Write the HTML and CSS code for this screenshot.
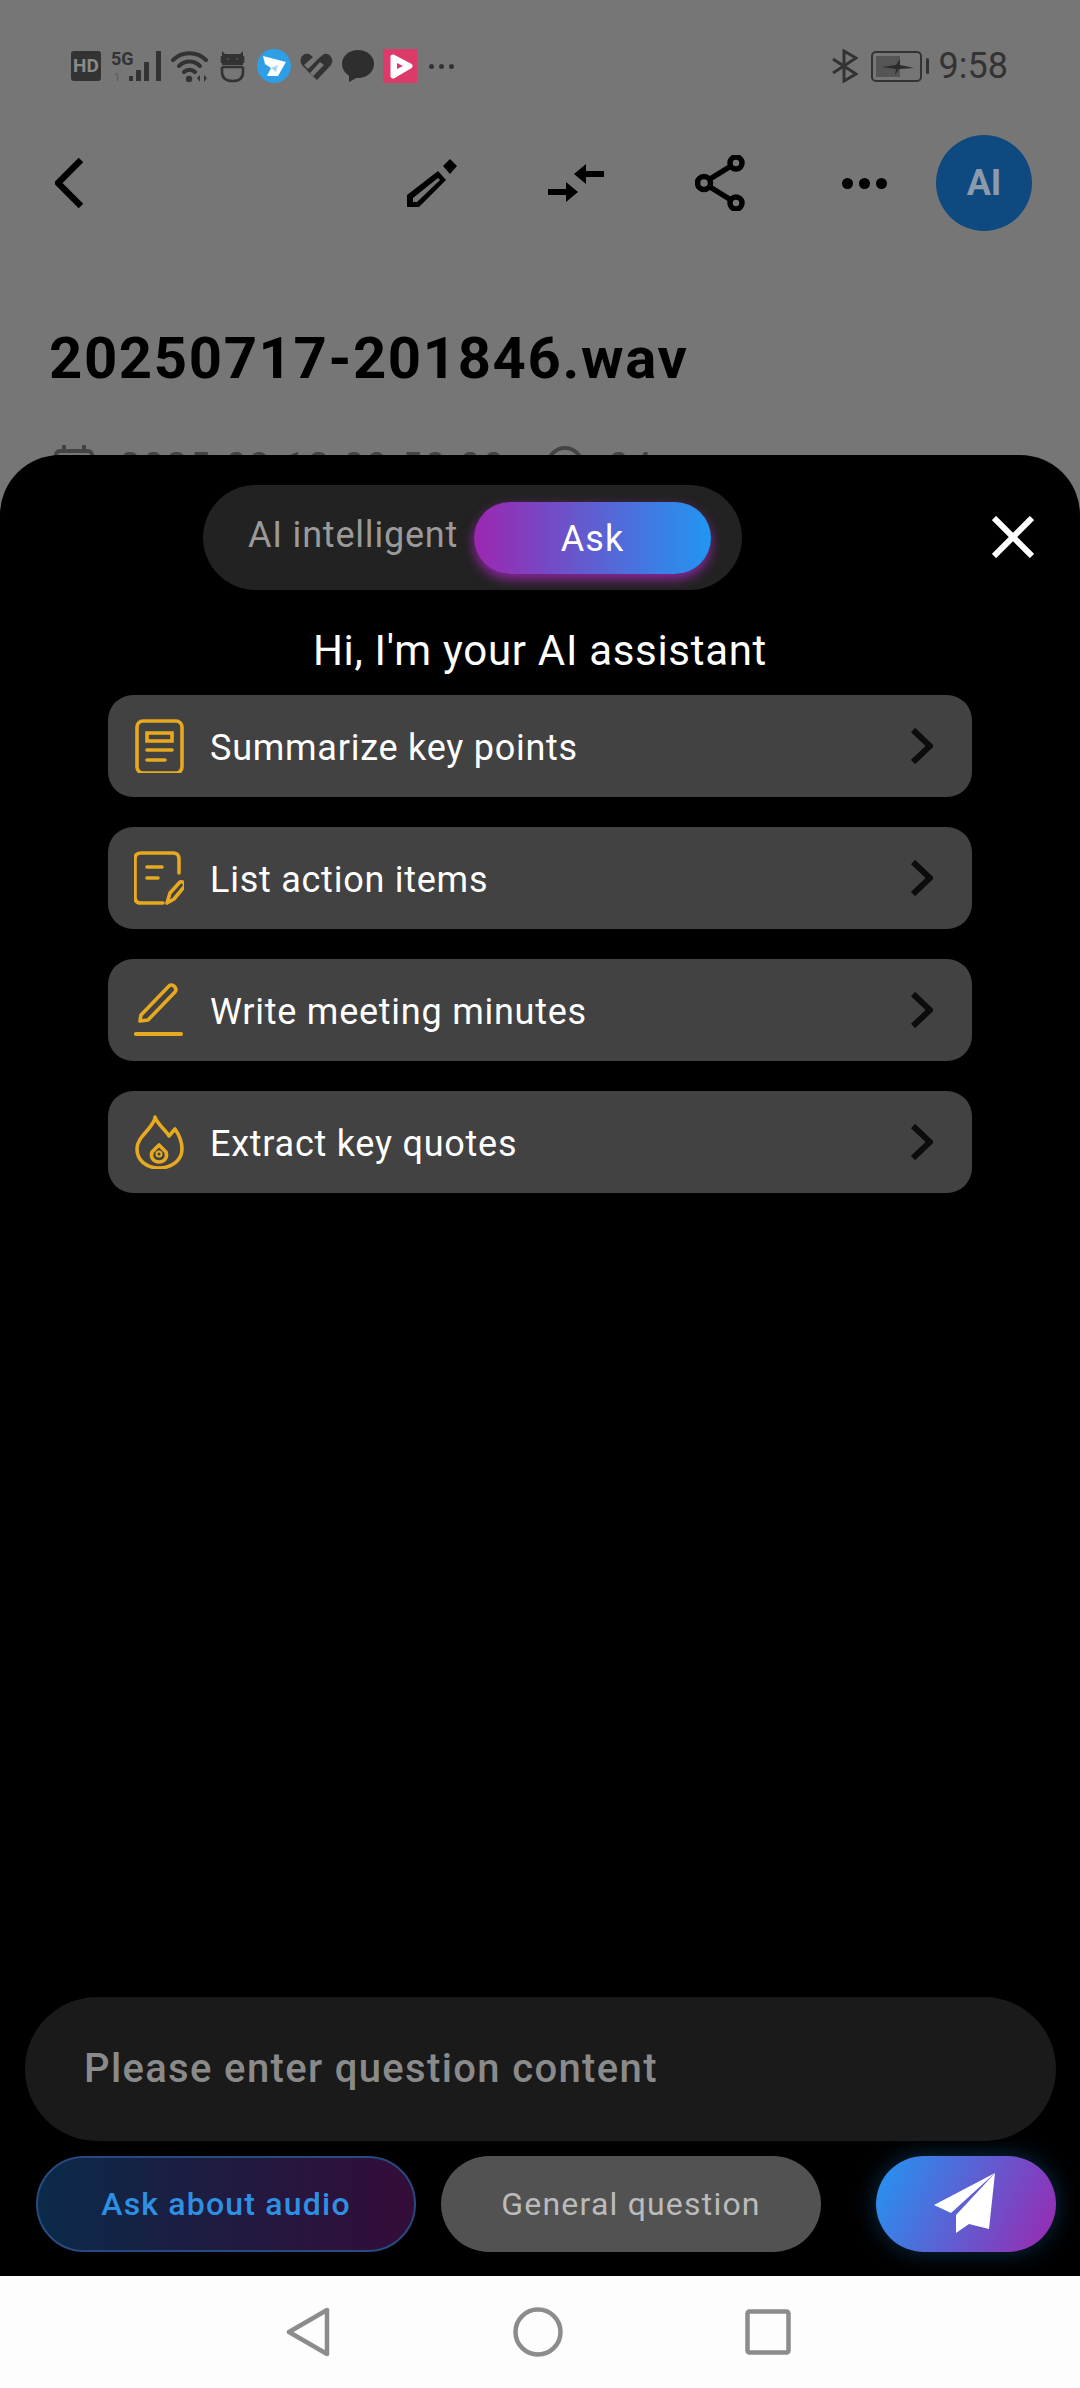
FILE: index.html
```html
<!DOCTYPE html>
<html>
<head>
  <meta charset="UTF-8">
  <meta name="viewport" content="width=device-width, initial-scale=1.0">
  <title>Recording detail</title>
  <link rel="stylesheet" href="styles.css">
</head>
<body>
  <div class="screen">
    <div class="main">
      <div class="status-bar">
        <div class="status-icons">
          <div class="hd">HD</div>
          <svg class="ic-signal" viewBox="0 0 54 34">
            <text x="2" y="16" class="sig-text">5G</text>
            <text x="5" y="32" class="sig-sub">1</text>
            <rect x="20" y="27" width="4" height="5" fill="#333"/>
            <rect x="27" y="21" width="5" height="11" fill="#333"/>
            <rect x="35" y="13" width="5" height="19" fill="#333"/>
            <rect x="47" y="2" width="5" height="30" fill="#333"/>
          </svg>
          <svg class="ic-wifi" viewBox="0 0 37 34" fill="none" stroke="#333" stroke-width="4" stroke-linecap="round">
            <path d="M2 11C11 2 26 2 35 11"/>
            <path d="M8 17C14 11 23 11 29 17"/>
            <path d="M13 23C16 20 21 20 24 23"/>
            <circle cx="18" cy="30" r="3.2" fill="#333" stroke="none"/>
            <path d="M26 29l3-3v7zM36 29l-3-3v7z" fill="#333" stroke="none"/>
          </svg>
          <svg class="ic-bot" viewBox="0 0 33 34" fill="none" stroke="#333" stroke-width="2.6">
            <path d="M6 2L9 5H24L27 2V16H6z" fill="#333" stroke="none"/>
            <circle cx="12" cy="10" r="2" fill="#767676"/>
            <circle cx="21" cy="10" r="2" fill="#767676"/>
            <path d="M6 14V7M27 14V7M6 18H27M6 18V23C6 29 10 32 17 32S27 29 27 23V18"/>
          </svg>
          <svg class="ic-app" viewBox="0 0 34 34">
            <circle cx="17" cy="17" r="17" fill="#2e9fe6"/>
            <path d="M6 7L29 13 21 27 10 27 14 19 8 15z" fill="#fff"/>
            <path d="M14 19L21 16 19 23z" fill="#a9d6f2"/>
          </svg>
          <svg class="ic-heart" viewBox="0 0 34 34" fill="#333">
            <path d="M17 31L3 16C-1 10 4 3 10 5L14 8 5 16 9 20 20 9 25 5C30 3 36 10 32 16L18 31 14 27 25 16 21 13 11 24z"/>
          </svg>
          <svg class="ic-bubble" viewBox="0 0 34 34">
            <ellipse cx="17" cy="15" rx="16" ry="14" fill="#2e2e2e"/>
            <path d="M8 24L8 33 17 28z" fill="#2e2e2e"/>
          </svg>
          <svg class="ic-app" viewBox="0 0 34 34">
            <rect width="34" height="34" fill="#dc3a68"/>
            <path d="M10 8L27 17 10 27z" fill="#fff" stroke="#fff" stroke-width="5" stroke-linejoin="round"/>
            <path d="M14 14L20 17 14 20z" fill="#dc3a68"/>
          </svg>
          <div class="more-dots"><span></span><span></span><span></span></div>
        </div>
        <div class="status-right">
          <svg class="ic-bt" viewBox="0 0 26 34" fill="none" stroke="#333" stroke-width="3">
            <path d="M1 10L24 25 12 32V2L24 9 1 24"/>
          </svg>
          <div class="battery">
            <div class="battery-body">
              <div class="battery-fill"></div>
              <svg class="battery-bolt" viewBox="0 0 32 16"><path d="M0 8L14 6 18 0 18 6 32 9 17 10 13 16 14 10z" fill="#2c2c2c"/></svg>
            </div>
            <div class="battery-nub"></div>
          </div>
          <span class="clock">9:58</span>
        </div>
      </div>

      <div class="toolbar">
        <svg class="back" viewBox="0 0 28 50" fill="none" stroke="#000" stroke-width="6.5"><path d="M26 2L3 25 26 48"/></svg>
        <div class="tool">
          <svg width="50" height="50" viewBox="0 0 50 50" fill="#000">
            <path d="M36 8L43 1 50 8 43 16z"/>
            <path d="M31 13L39 22 12 49H0V37zM31 20L6 40V44H10L33 22z" fill-rule="evenodd"/>
          </svg>
        </div>
        <div class="tool">
          <svg width="56" height="38" viewBox="0 0 56 38" fill="#000">
            <path d="M26 10L38 0V7H56V13H38V20z"/>
            <path d="M30 28L18 18V25H0V31H18V38z"/>
          </svg>
        </div>
        <div class="tool">
          <svg width="50" height="56" viewBox="0 0 50 56" fill="none" stroke="#000" stroke-width="5.5">
            <circle cx="9" cy="28" r="6.5"/>
            <circle cx="41" cy="8" r="6"/>
            <circle cx="41" cy="48" r="6"/>
            <path d="M15 24L36 11M15 32L36 45"/>
          </svg>
        </div>
        <div class="tool">
          <div class="more-dots big"><span></span><span></span><span></span></div>
        </div>
        <div class="avatar">AI</div>
      </div>

      <h1 class="file-title">20250717-201846.wav</h1>

      <div class="meta-row">
        <svg class="meta-cal" viewBox="0 0 40 40" fill="none" stroke="#444" stroke-width="4">
          <rect x="2" y="6" width="36" height="32" rx="4"/>
          <path d="M10 0V8M30 0V8"/>
        </svg>
        <span class="meta-text">2025-08-12 09:50:00</span>
        <svg class="meta-clock" viewBox="0 0 40 40" fill="none" stroke="#444" stroke-width="4"><circle cx="20" cy="20" r="17"/></svg>
        <span class="meta-text">04</span>
      </div>

      <div class="sheet">
        <div class="sheet-top">
          <div class="sheet-head">
            <div class="mode-switch">
              <span class="mode-label">AI intelligent</span>
              <span class="mode-active">Ask</span>
            </div>
            <svg class="close" viewBox="0 0 42 42" fill="none" stroke="#fff" stroke-width="6"><path d="M2 2L40 40M40 2L2 40"/></svg>
          </div>
          <div class="greeting">Hi, I'm your AI assistant</div>
          <div class="prompt-list">
            <div class="prompt">
              <svg class="prompt-icon" viewBox="0 0 50 54" fill="none" stroke="#e6a91f" stroke-width="3.6" stroke-linecap="round">
                <rect x="3" y="2" width="45" height="52" rx="6"/>
                <rect x="13" y="14" width="25" height="8"/>
                <path d="M13 31H38M13 41H31"/>
              </svg>
              <span class="prompt-text">Summarize key points</span>
              <svg class="chevron" viewBox="0 0 22 36" fill="none" stroke="#0c0c0c" stroke-width="6"><path d="M2 2L19 18 2 34"/></svg>
            </div>
            <div class="prompt">
              <svg class="prompt-icon" viewBox="0 0 50 54" fill="none" stroke="#e6a91f" stroke-width="3.6" stroke-linecap="round" stroke-linejoin="round">
                <path d="M45 22V8C45 4 43 2 39 2H7C3 2 1 4 1 8V46C1 50 3 52 7 52H29"/>
                <path d="M13 16H28M13 27H24"/>
                <path d="M33 52L36 42 46 31C49 30 52 33 50 36L40 48z"/>
              </svg>
              <span class="prompt-text">List action items</span>
              <svg class="chevron" viewBox="0 0 22 36" fill="none" stroke="#0c0c0c" stroke-width="6"><path d="M2 2L19 18 2 34"/></svg>
            </div>
            <div class="prompt">
              <svg class="prompt-icon" viewBox="0 0 50 54" fill="none" stroke="#e6a91f" stroke-width="3.6" stroke-linecap="round" stroke-linejoin="round">
                <path d="M7 32L35 3C38 0 44 5 41 9L14 37 6 38z"/>
                <path d="M2 51H47" stroke-width="4.2"/>
              </svg>
              <span class="prompt-text">Write meeting minutes</span>
              <svg class="chevron" viewBox="0 0 22 36" fill="none" stroke="#0c0c0c" stroke-width="6"><path d="M2 2L19 18 2 34"/></svg>
            </div>
            <div class="prompt">
              <svg class="prompt-icon" viewBox="0 0 50 54" fill="none" stroke="#e6a91f" stroke-width="3.6" stroke-linejoin="round">
                <path d="M21 2C23 9 32 15 35 21L41 14C46 21 48 28 48 34C48 45 38 53 25 53C12 53 3 45 3 34C3 24 12 18 16 12C18 9 21 6 21 2z"/>
                <path d="M25 30L32 37C34 43 30 47 25 47S16 43 18 37z"/>
                <circle cx="25" cy="39" r="2.5" stroke-width="2"/>
              </svg>
              <span class="prompt-text">Extract key quotes</span>
              <svg class="chevron" viewBox="0 0 22 36" fill="none" stroke="#0c0c0c" stroke-width="6"><path d="M2 2L19 18 2 34"/></svg>
            </div>
          </div>
        </div>

        <div class="composer">
          <div class="question-box">Please enter question content</div>
          <div class="composer-actions">
            <button class="chip chip-active">Ask about audio</button>
            <button class="chip">General question</button>
            <button class="send">
              <svg width="70" height="70" viewBox="0 0 70 70" fill="#fff">
                <path d="M66 4L5 36 22 44z"/>
                <path d="M66 4L27 46V64L40 55 60 60z"/>
              </svg>
            </button>
          </div>
        </div>
      </div>
    </div>

    <div class="nav-bar">
      <svg width="44" height="50" viewBox="0 0 44 50" fill="none" stroke="#8c8c8c" stroke-width="4.5" stroke-linejoin="round"><path d="M41 3V47L3 25z"/></svg>
      <svg width="50" height="50" viewBox="0 0 50 50" fill="none" stroke="#8c8c8c" stroke-width="4.5"><circle cx="25" cy="25" r="22.5"/></svg>
      <svg width="46" height="46" viewBox="0 0 46 46" fill="none" stroke="#8c8c8c" stroke-width="4.5"><rect x="2.5" y="2.5" width="41" height="41" rx="2"/></svg>
    </div>
  </div>
</body>
</html>
```

FILE: styles.css
```css
* {
  box-sizing: border-box;
}
body {
  margin: 0;
  font-family: Roboto, "Noto Sans", sans-serif;
}
.screen {
  width: 1080px;
  height: 2388px;
  display: flex;
  flex-direction: column;
  overflow: hidden;
}
.main {
  flex: 1;
  position: relative;
  background-color: #767676;
}

/* status bar */
.status-bar {
  height: 132px;
  padding: 0 72px 0 71px;
  display: flex;
  align-items: center;
  justify-content: space-between;
}
.status-icons,
.status-right {
  display: flex;
  align-items: center;
}
.status-icons {
  gap: 8px;
}
.hd {
  width: 30px;
  height: 30px;
  background-color: #333;
  border-radius: 3px;
  color: #8a8a8a;
  font-size: 19px;
  font-weight: 700;
  line-height: 30px;
  text-align: center;
}
.ic-signal {
  width: 54px;
  height: 34px;
  overflow: visible;
}
.sig-text {
  font-size: 18px;
  font-weight: 700;
  fill: #333;
}
.sig-sub {
  font-size: 11px;
  fill: #5a5a5a;
}
.ic-wifi {
  width: 37px;
  height: 34px;
}
.ic-bot {
  width: 33px;
  height: 34px;
}
.ic-app,
.ic-heart,
.ic-bubble {
  width: 34px;
  height: 34px;
}
.more-dots {
  width: 32px;
  display: flex;
  justify-content: center;
  gap: 5px;
}
.more-dots span {
  width: 5px;
  height: 5px;
  border-radius: 50%;
  background-color: #333;
}
.more-dots.big {
  width: auto;
  gap: 6px;
}
.more-dots.big span {
  width: 11px;
  height: 11px;
  background-color: #000;
}
.ic-bt {
  width: 26px;
  height: 34px;
  margin-right: 13px;
}
.battery {
  display: flex;
  align-items: center;
  gap: 4px;
  margin-right: 10px;
}
.battery-body {
  width: 51px;
  height: 31px;
  padding: 3px;
  border: 2.5px solid #333;
  border-radius: 5px;
  position: relative;
}
.battery-fill {
  width: 24px;
  height: 100%;
  background-color: #555;
}
.battery-bolt {
  position: absolute;
  left: 9px;
  top: 6px;
  width: 32px;
  height: 16px;
}
.battery-nub {
  width: 3px;
  height: 16px;
  background-color: #333;
  border-radius: 2px;
}
.clock {
  font-size: 36px;
  color: #333;
}

/* toolbar */
.toolbar {
  height: 102px;
  padding: 0 48px 0 55px;
  display: flex;
  align-items: center;
}
.back {
  width: 28px;
  height: 50px;
  margin-right: auto;
}
.tool {
  width: 144px;
  display: flex;
  justify-content: center;
  align-items: center;
}
.avatar {
  width: 96px;
  height: 96px;
  border-radius: 50%;
  background-color: #0e4a80;
  color: #8c9bac;
  font-size: 36px;
  font-weight: 700;
  line-height: 96px;
  text-align: center;
}
.file-title {
  margin: 0;
  padding: 91px 0 0 49px;
  font-size: 58px;
  font-weight: 700;
  line-height: 66px;
  letter-spacing: 1.65px;
  color: #000;
}
.meta-row {
  margin-top: 54px;
  padding-left: 54px;
  display: flex;
  align-items: flex-start;
}
.meta-cal {
  width: 40px;
  height: 40px;
}
.meta-clock {
  width: 40px;
  height: 40px;
  margin: 0 24px 0 38px;
}
.meta-text {
  margin-left: 26px;
  font-size: 36px;
  letter-spacing: 3px;
  line-height: 42px;
  color: #444;
}
.meta-clock + .meta-text {
  margin-left: 0;
}

/* ai sheet */
.sheet {
  position: absolute;
  top: 455px;
  left: 0;
  right: 0;
  bottom: 0;
  padding: 30px 24px 24px;
  background-color: #000;
  border-radius: 60px 60px 0 0;
  display: flex;
  flex-direction: column;
  justify-content: space-between;
}
.sheet-head {
  position: relative;
  display: flex;
  padding-left: 179px;
}
.mode-switch {
  width: 539px;
  height: 105px;
  padding: 0 31px 0 45px;
  background-color: #222;
  border-radius: 53px;
  display: flex;
  align-items: center;
  justify-content: space-between;
}
.mode-label {
  padding-bottom: 5px;
  font-size: 36px;
  letter-spacing: 0.8px;
  color: #9a9a9a;
}
.mode-active {
  width: 237px;
  height: 72px;
  padding-top: 1px;
  border-radius: 36px;
  background: linear-gradient(90deg, #9c27b0, #2196f3);
  box-shadow: 0 5px 12px rgba(156, 39, 176, 0.9);
  color: #fff;
  font-size: 36px;
  letter-spacing: 1px;
  line-height: 72px;
  text-align: center;
}
.close {
  position: absolute;
  top: 31px;
  right: 22px;
  width: 42px;
  height: 42px;
}
.greeting {
  margin-top: 36px;
  font-size: 42px;
  line-height: 50px;
  letter-spacing: 0.7px;
  text-align: center;
  color: #fff;
}
.prompt-list {
  margin: 19px 84px 0;
  display: flex;
  flex-direction: column;
  gap: 30px;
}
.prompt {
  height: 102px;
  padding: 0 27px 0 26px;
  background-color: #424242;
  border-radius: 25px;
  display: flex;
  align-items: center;
}
.prompt-icon {
  width: 50px;
  height: 54px;
  margin-right: 26px;
}
.prompt-text {
  flex: 1;
  padding-top: 3px;
  font-size: 36px;
  letter-spacing: 0.75px;
  color: #fff;
}
.chevron {
  width: 22px;
  height: 36px;
  margin-right: 12px;
}

/* bottom composer */
.composer {
  display: flex;
  flex-direction: column;
  gap: 15px;
}
.question-box {
  height: 144px;
  padding-left: 59px;
  margin-left: 1px;
  background-color: #1a1a1a;
  border-radius: 72px;
  font-size: 40px;
  font-weight: 500;
  line-height: 144px;
  letter-spacing: 1.35px;
  color: #8a8a8a;
}
.composer-actions {
  padding-left: 12px;
  display: flex;
  align-items: center;
  gap: 25px;
}
.chip {
  width: 380px;
  height: 96px;
  padding: 0;
  border: none;
  border-radius: 48px;
  background-color: #525252;
  font-family: inherit;
  font-size: 32px;
  letter-spacing: 1.2px;
  color: #bbb;
}
.chip-active {
  border: 2px solid #274a80;
  background: linear-gradient(90deg, #0b2a49, #340c38);
  font-weight: 500;
  color: #2e90e2;
}
.send {
  width: 180px;
  height: 96px;
  margin-left: auto;
  padding: 0 4px 0 0;
  border: none;
  border-radius: 48px;
  background: linear-gradient(115deg, #2196f3, #9c27b0);
  box-shadow: 0 0 24px rgba(33, 150, 243, 0.3);
  display: flex;
  align-items: center;
  justify-content: center;
}

.nav-bar {
  height: 112px;
  padding: 0 289px 0 286px;
  background-color: #fdfdfd;
  display: flex;
  align-items: center;
  justify-content: space-between;
}
```
